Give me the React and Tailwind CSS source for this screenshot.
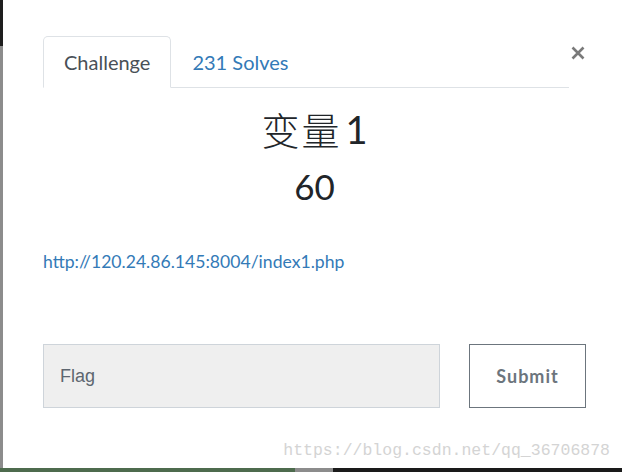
export default function App() {
  return (
    <div className="flex h-[472px] w-[622px] flex-col overflow-hidden bg-white">
      <div className="flex min-h-0 flex-1">
        <div className="flex w-[3px] flex-col">
          <div className="h-[46px] bg-[#1e1e1e]" />
          <div className="flex-1 bg-[#8c8c8c]" />
        </div>
        <div className="relative flex-1 pl-[40px] pt-[36px] font-['Lato',sans-serif]">
          <div className="flex items-start">
            <div className="flex w-[526px] border-b border-[#dee2e6]">
              <div className="-mb-px flex h-[52px] items-center rounded-t-[5px] border border-[#dee2e6] border-b-white bg-white px-[20px] text-[20px] text-[#495057]">
                Challenge
              </div>
              <div className="flex h-[51px] items-center px-[21px] text-[20px] text-[#337ab7]">
                231 Solves
              </div>
            </div>
            <button className="ml-[2px] mt-[10px] flex h-[14px] w-[14px] items-center justify-center">
              <svg width="14" height="14" viewBox="0 0 14 14">
                <path d="M1.5 1.5 L12.5 12.5 M12.5 1.5 L1.5 12.5" stroke="#7a7a7a" strokeWidth="2.6" strokeLinecap="butt" />
              </svg>
            </button>
          </div>
          <div className="w-[543px]">
            <div className="mt-[19px] flex justify-center text-[38px] leading-[44px] text-[#212529]">
              <span className="font-['Noto_Sans_CJK_SC',sans-serif] font-light tracking-[2px]">变量</span>
              <span className="ml-[4px]">1</span>
            </div>
            <div className="mt-[15px] text-center text-[35px] leading-[40px] text-[#212529]">60</div>
            <div className="mt-[44px] text-[17.6px] leading-[24px] text-[#337ab7]">
              http://120.24.86.145:8004/index1.php
            </div>
            <div className="mt-[70px] flex gap-[29px]">
              <div className="flex h-[64px] w-[397px] items-center border border-[#ced4da] bg-[#efefef] px-[16px] font-['Liberation_Sans',sans-serif] text-[18px] text-[#5d6670]">
                Flag
              </div>
              <div className="flex h-[64px] w-[117px] items-center justify-center border border-[#6c757d] text-[18px] font-bold tracking-[1px] text-[#6c757d]">
                Submit
              </div>
            </div>
          </div>
          <div className="absolute bottom-[6px] right-[12px] text-[16.5px] leading-[22px] text-[#d4d4d4] font-['Liberation_Mono',monospace]">
            https://blog.csdn.net/qq_36706878
          </div>
        </div>
      </div>
      <div className="flex h-[4px]">
        <div className="w-[295px] bg-[#4d6b4d]" />
        <div className="w-[38px] bg-[#8c8c8c]" />
        <div className="flex-1 bg-[#1a1a1a]" />
      </div>
    </div>
  );
}
